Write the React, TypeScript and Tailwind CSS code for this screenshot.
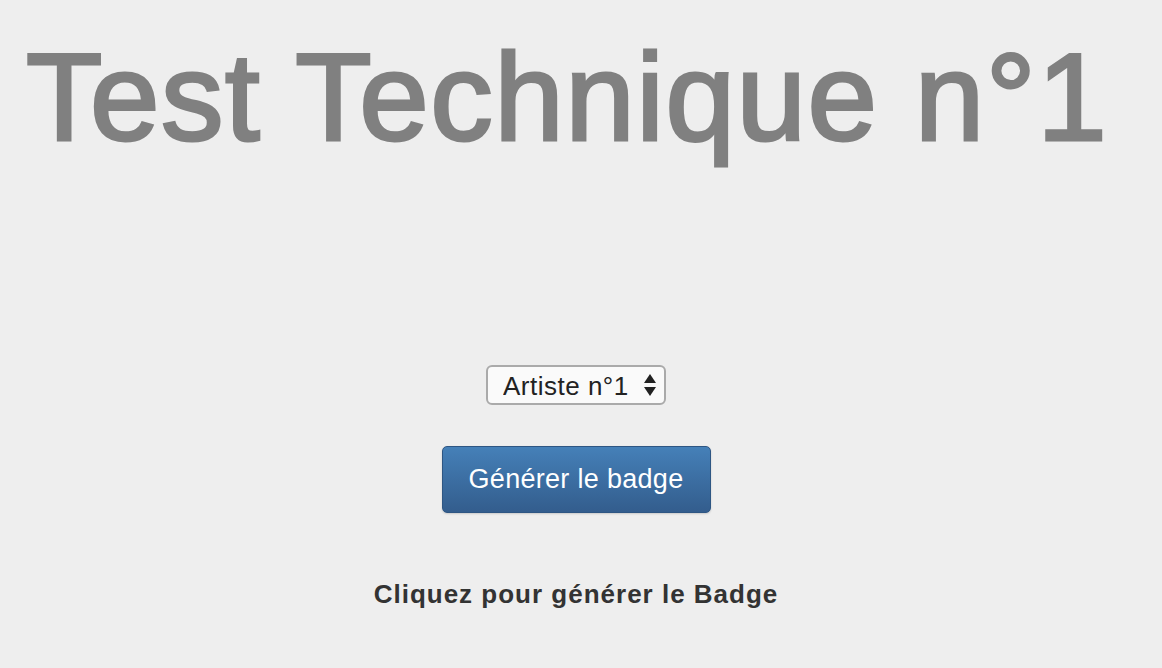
import React from "react";

const App = () => {
  return (
    <div className="min-h-[668px] w-full bg-[#eeeeee] font-['Liberation_Sans',Arial,sans-serif]">
      <h1 className="pl-[26px] pt-[22px] text-[125px] leading-[150px] font-normal tracking-[1.5px] text-[#808080] [-webkit-text-stroke:3px_#808080]">
        Test Technique n°1
      </h1>
      <div className="mt-[193px] flex flex-col items-center pr-[10px]">
        <div className="relative">
          <select
            defaultValue="1"
            className="h-[40px] w-[180px] appearance-none rounded-[6px] border-2 border-[#aaaaaa] bg-[#fafafa] pl-[15px] text-[26px] tracking-[0.5px] text-[#222222] outline-none"
          >
            <option value="1">Artiste n°1</option>
            <option value="2">Artiste n°2</option>
            <option value="3">Artiste n°3</option>
          </select>
          <svg
            className="pointer-events-none absolute right-[9px] top-[8px]"
            width="14"
            height="24"
            viewBox="0 0 14 24"
          >
            <path d="M7 1 L13 10 L1 10 Z" fill="#222" />
            <path d="M1 14 L13 14 L7 23 Z" fill="#222" />
          </svg>
        </div>
        <button className="mt-[41px] h-[67px] w-[269px] rounded-[5px] border border-[#2e5683] bg-gradient-to-b from-[#4580b8] to-[#335d8d] text-[27px] tracking-[0.3px] text-white shadow-[0_1px_2px_rgba(0,0,0,0.15)]">
          Générer le badge
        </button>
        <p className="mt-[62px] text-[26px] font-bold tracking-[1px] text-[#333333]">
          Cliquez pour générer le Badge
        </p>
      </div>
    </div>
  );
};

export default App;
